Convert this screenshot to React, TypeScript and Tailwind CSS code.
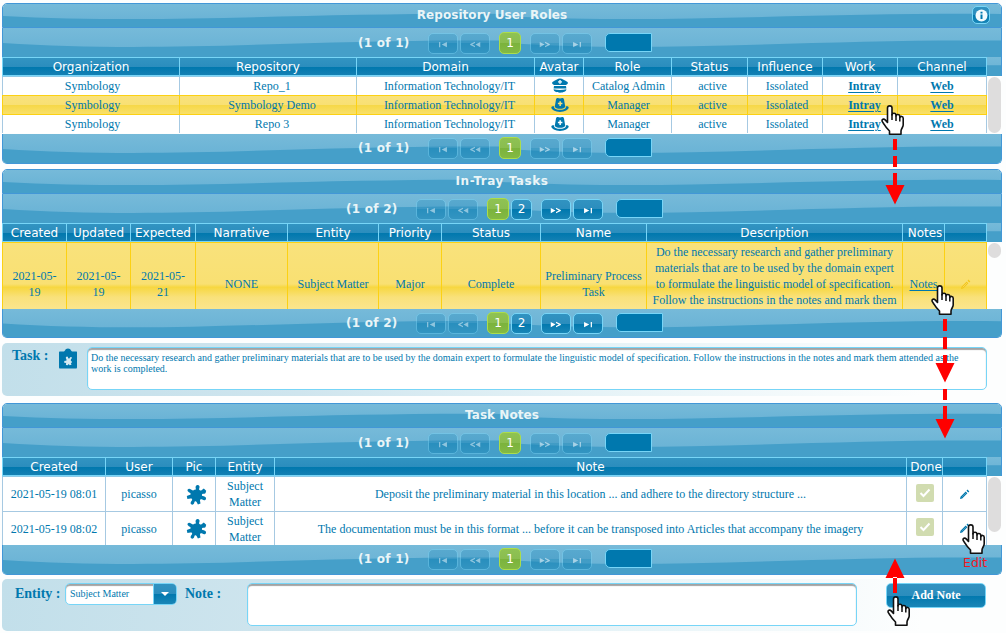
import React from "react";

const WAVE = "M0 15.5 C60 19.500 120 20.5 190 19 C290 16.5 390 12 500 13 L500 30 L0 30 Z";

function Wave() {
  return (
    <span className="absolute inset-0 flex bg-gradient-to-b from-[#76bad9] to-[#65b0d4]">
      {[0, 1].map((i) => (
        <svg key={i} className="h-full w-1/2" viewBox="0 0 500 30" preserveAspectRatio="none">
          <path d={WAVE} fill="#459fc9" />
        </svg>
      ))}
    </span>
  );
}

function NavGlyph({ kind }: { kind: number }) {
  return (
    <svg width="12" height="7" viewBox="0 0 13 8" className="mt-[2px]" fill="currentColor">
      {kind === 0 && <path d="M2 1h1.400v6H2zM11 1v6L5 4z" />}
      {kind === 1 && <path d="M12.500 1v6L7 4zM6.500 .8v1.600L3.200 4l3.300 1.600v1.600L1 4.700V3.300z" />}
      {kind === 2 && <path d="M.5 1v6L6 4zM6.500 .8v1.600L9.800 4 6.500 5.600v1.600L12 4.700V3.300z" />}
      {kind === 3 && <path d="M2 1v6l6-3zM9.600 1H11v6H9.600z" />}
    </svg>
  );
}

const glass = "bg-[linear-gradient(#3193c1_0%,#2b8dbd_50%,#0078ae_50%,#1a86b7_100%)]";

function NavButton({ kind, off }: { kind: number; off?: boolean }) {
  return (
    <span
      className={
        "flex h-[21px] w-[30px] items-center justify-center rounded-[5px] border border-[#77d5f7] text-white " +
        glass +
        (off ? " opacity-40" : "")
      }
    >
      <NavGlyph kind={kind} />
    </span>
  );
}

function Paginator({ pages, bottom }: { pages: number; bottom?: boolean }) {
  const two = pages === 2;
  return (
    <div
      className={
        "relative overflow-hidden border-x border-[#4297d7] " +
        (bottom ? "rounded-b-[5px] border-b " : "") +
        (bottom ? (two ? "h-[29px]" : "h-[30px]") : "h-[29px]")
      }
    >
      <Wave />
      <div
        className={
          "relative flex items-center " + (two ? "pl-[343px] " : "pl-[355px] ") + (bottom ? "pt-[3px]" : "pt-[4px]")
        }
      >
        <span className="w-[70px] pb-px font-['DejaVu_Sans'] text-[12px] leading-[20px] font-bold tracking-[0.25px] whitespace-pre text-[#eaf5f7]">
          (1 of {pages})
        </span>
        <NavButton kind={0} off />
        <span className="w-[2px]" />
        <NavButton kind={1} off />
        <span className="ml-[9px] flex h-[22px] w-[22px] items-center justify-center rounded-[5px] border border-[#acdd4a] bg-[linear-gradient(#8fc253_0%,#8abd50_50%,#7bb33c_50%,#83b944_100%)] font-['DejaVu_Sans'] text-[12px] text-white">
          1
        </span>
        {two && (
          <span
            className={
              "ml-[2px] flex h-[21px] w-[21px] items-center justify-center rounded-[5px] border border-[#77d5f7] font-['DejaVu_Sans'] text-[12px] text-white " +
              glass
            }
          >
            2
          </span>
        )}
        <span className="w-[9px]" />
        <NavButton kind={2} off={!two} />
        <span className="w-[2px]" />
        <NavButton kind={3} off={!two} />
        <span className="mb-px ml-[13px] h-[19px] w-[47px] rounded-l-[5px] border border-[#77d5f7] bg-[#0078ae]" />
      </div>
    </div>
  );
}

function Title({ text, info, wide }: { text: string; info?: boolean; wide?: boolean }) {
  return (
    <div className="relative h-[25px] overflow-hidden rounded-t-[5px] border border-[#4297d7]">
      <Wave />
      <div className="relative flex items-start pr-[11px]">
        <h2
          className={
            "flex-1 text-center font-['DejaVu_Sans'] text-[12px] leading-[23px] font-bold text-[#eaf5f7] " +
            (info ? "" : "pl-[11px] ") +
            (wide ? "tracking-[0.55px]" : "tracking-[0.05px]")
          }
        >
          {text}
        </h2>
        {info && (
          <span
            className={
              "-ml-[9px] mt-[2px] flex h-[18px] w-[18px] items-center justify-center rounded-[5px] border border-[#77d5f7] " + glass
            }
          >
            <svg width="13" height="13" viewBox="0 0 13 13">
              <circle cx="6.5" cy="6.5" r="6" fill="#f2fafd" />
              <path d="M5.500 2.700h2v1.800h-2zM5.500 5.400h2v4.700h-2z" fill="#0078ae" />
            </svg>
          </span>
        )}
      </div>
    </div>
  );
}

function Head({ cols, grid }: { cols: string[]; grid: string }) {
  return (
    <div className="relative h-[19px] overflow-hidden border-r border-[#4297d7]">
      <Wave />
      <div
        className={
          "relative grid h-full w-[985px] border-y border-l border-[#77d5f7] bg-[linear-gradient(#3294c2_0%,#2b8dbd_52%,#0078ae_54%,#1480b3_100%)] " +
          grid
        }
      >
        {cols.map((c, i) => (
          <span
            key={i}
            className={
              "border-r border-[#77d5f7] text-center font-['DejaVu_Sans'] text-[12px] leading-[18px] whitespace-nowrap text-white" +
              (c === "Notes" || c === "Done" ? " pl-[3px]" : "")
            }
          >
            {c}
          </span>
        ))}
      </div>
    </div>
  );
}

const CELL = "flex items-center justify-center border-r border-[#a6c9e2] text-center";
const YCELL = "flex items-center justify-center border-r border-[#fcd113] text-center";

const GRID_ROLES = "grid-cols-[177px_177px_178px_49px_88px_76px_75px_75px_89px]";
const GRID_TASKS = "grid-cols-[64px_64px_65px_92px_91px_63px_99px_106px_256px_42px_42px]";
const GRID_NOTES = "grid-cols-[103px_67px_43px_59px_632px_36px_44px]";

function CapIcon() {
  return (
    <svg width="18" height="16" viewBox="0 0 18 16" fill="#0078ae">
      <path d="M9 .5C11 .5 14 2.500 16.500 4c.9.8.4 2.300-1.500 3H3C1.100 6.300.6 4.800 1.500 4 4 2.500 7 .5 9 .5z" />
      <path d="M3 8h12l.4 2.500H2.600zM2.600 11.300c4 .8 8.800.8 12.800 0 0 2-2.900 3.400-6.400 3.400s-6.400-1.400-6.400-3.400z" />
      <path d="M8.200 2h1.600v1.100h1v1.600h-1v1H8.200v-1h-1V3.100h1z" fill="#dbeef7" />
    </svg>
  );
}

function HatIcon({ bg }: { bg: string }) {
  return (
    <svg width="18" height="16" viewBox="0 0 18 16" fill="#0078ae">
      <path d="M3.800 9.500 5 2.500C5.500.8 7 .6 9 1.600c2-1 3.500-.8 4 .9l1.200 7c0 1.500-2.700 2.300-5.200 2.300s-5.200-.8-5.200-2.300z" />
      <path d="M3.200 9.400C1.800 9.200.4 9.500.3 10.500c0 2.200 4 4.400 8.700 4.400s8.700-2.200 8.700-4.400c-.1-1-1.500-1.300-2.900-1.100l.1 1c-.4 1.600-3 2.400-5.900 2.400s-5.500-.8-5.900-2.400z" />
      <path d="M8.400 4.200h1.500v1.600h1.500v1.500H9.900V9H8.400V7.300H6.900V5.800h1.500z" fill={bg} />
    </svg>
  );
}

function PuzzleIcon() {
  return (
    <svg width="21" height="21" viewBox="0 0 21 21" fill="#0078ae">
      <circle cx="10.500" cy="10.500" r="5.200" />
      <path d="M5 5.500 7.800 7c1.600.6 2.700-.4 2.200-1.800C9 3 9.800.8 11.800 1c2 .2 2 2 1.400 3.600-.4 1.500.6 2.400 2 1.800l2.600-1.800 2.400 2.200-.6 2.200c-.6 1-1.800.7-2.800.8-1.400.3-1.300 1.900-.1 2.300 1.600.3 3.600.7 3.300 2.700-.4 2-2.600 1.700-3.700.7-1.100-.8-2.500-.1-2.300 1.300l.5 2.600-2.600 1-1.300-2.400c-.8-1.200-2.100-.7-2.300.5-.3 1.800-1.700 2.800-3.100 1.800-1.300-1-.2-2.800.7-3.900.7-1.200-.1-2.100-1.300-1.900L1.400 15 .8 12l2.600-.9c1.500-.4 1.700-1.600.4-2.300C2.100 8 1 6.800 1.700 5.600c.8-1.200 2.300-.8 3.300-.1z" />
    </svg>
  );
}

function Pencil({ color }: { color: string }) {
  return (
    <svg width="11" height="11" viewBox="0 0 11 11" fill={color}>
      <path d="M1 10l.5-2.300 5.200-5.200 1.700 1.700-5.200 5.200zM7.500 1.700 8.500.6l1.800 1.800-1 1.100z" />
      <path d="M2.700 8.300 7.200 3.800" stroke="#fff" strokeOpacity=".45" strokeWidth=".6" />
    </svg>
  );
}

function Check() {
  return (
    <span className="flex h-[18px] w-[18px] items-center justify-center rounded-[2px] bg-[#d1dcb0]">
      <svg width="12" height="10" viewBox="0 0 12 10">
        <path d="M1.500 5l3 3 6-6.500" fill="none" stroke="#fff" strokeWidth="2" />
      </svg>
    </span>
  );
}

function Hand({ pos }: { pos: string }) {
  return (
    <svg className={"absolute " + pos} width="24" height="31" viewBox="0 0 24 31">
      <path
        d="M6.500 17.500V3C6.500.2 11 .2 11 3v7c0-2.600 4-2.200 4 .2v.8c.3-2.200 3.800-1.800 3.800.5v1c.5-1.700 3.400-1.300 3.400.8V20c0 2-2.200 4-2.200 6v3.200H8.500V26c-2-2-4-4-5.500-6.800L1.200 16.400c-.7-2.200 1.600-3 3-1.500z"
        fill="#fff"
        stroke="#111"
        strokeWidth="1.600"
        strokeLinejoin="round"
      />
      <path d="M11 9v6M15 10.500V16M18.800 12v4.500" stroke="#111" strokeWidth="1.500" />
    </svg>
  );
}

function ScrollThumb({ h }: { h: string }) {
  return <span className={"mt-px ml-[1px] w-[13px] rounded-[7px] bg-[#dedddd] " + h} />;
}

const roles = [
  ["Repo_1", "Catalog Admin"],
  ["Symbology Demo", "Manager"],
  ["Repo 3", "Manager"],
];

const notes = [
  ["2021-05-19 08:01", "Deposit the preliminary material in this location ... and adhere to the directory structure ..."],
  [
    "2021-05-19 08:02",
    "The documentation must be in this format ... before it can be transposed into Articles that accompany the imagery",
  ],
];

const FIELD = "rounded-[5px] border border-[#77d5f7] bg-white shadow-[inset_0_2px_1px_#a3a3a3]";
const SOFT = "flex rounded-[5px] bg-[linear-gradient(95deg,#c2dfea_0%,#cfe5ee_30%,#e6f3f7_60%,#fdfefe_92%)]";

export default function App() {
  return (
    <div className="relative flex h-[633px] w-[1006px] flex-col overflow-hidden bg-[#fdfefe] pt-[3px] pr-[4px] pl-[2px] font-['Liberation_Serif',serif] text-[12px] leading-[16px] text-[#0078ae]">
      <section>
        <Title text="Repository User Roles" info />
        <Paginator pages={1} />
        <Head
          grid={GRID_ROLES}
          cols={["Organization", "Repository", "Domain", "Avatar", "Role", "Status", "Influence", "Work", "Channel"]}
        />
        <div className="flex h-[58px]">
          <div className="w-[985px] border-t border-[#8fcbe8]">
            {roles.map(([repo, role], i) => {
              const y = i === 1;
              const c = y ? YCELL : CELL;
              return (
                <div
                  key={i}
                  className={
                    "grid border-l " +
                    GRID_ROLES +
                    (y
                      ? " h-[20px] border-y border-[#fcd113] bg-[linear-gradient(#f9e27c_0%,#f8e074_48%,#f6d848_52%,#f9e06a_100%)]"
                      : " h-[18px] border-[#a6c9e2] bg-white")
                  }
                >
                  <span className={c + " pl-[3px]"}>Symbology</span>
                  <span className={c + " pl-[8px]"}>{repo}</span>
                  <span className={c + " pl-[8px]"}>Information Technology/IT</span>
                  <span className={c + " pl-[2px]"}>{i === 0 ? <CapIcon /> : <HatIcon bg={y ? "#f9e27c" : "#fff"} />}</span>
                  <span className={c + " pl-[2px] whitespace-nowrap"}>{role}</span>
                  <span className={c + " pl-[6px]"}>active</span>
                  <span className={c + " pl-[4px]"}>Issolated</span>
                  <a className={c + " pl-[9px] font-bold underline underline-offset-[2px]"}>Intray</a>
                  <a className={c + " font-bold underline underline-offset-[2px]"}>Web</a>
                </div>
              );
            })}
          </div>
          <ScrollThumb h="h-[56px]" />
        </div>
        <Paginator pages={1} bottom />
      </section>

      <section className="mt-[5px]">
        <Title text="In-Tray Tasks" wide />
        <Paginator pages={2} />
        <Head
          grid={GRID_TASKS}
          cols={["Created", "Updated", "Expected", "Narrative", "Entity", "Priority", "Status", "Name", "Description", "Notes", ""]}
        />
        <div className="flex h-[67px] overflow-hidden">
          <div
            className={
              "grid h-[83px] w-[985px] shrink-0 border-t border-l border-[#fcd113] bg-[linear-gradient(#f9e27c_0%,#f9e072_50%,#f7d740_54%,#f9e17a_66%,#fae58c_80%)] " +
              GRID_TASKS
            }
          >
            <span className={YCELL}>2021-05-<br />19</span>
            <span className={YCELL}>2021-05-<br />19</span>
            <span className={YCELL}>2021-05-<br />21</span>
            <span className={YCELL}>NONE</span>
            <span className={YCELL}>Subject Matter</span>
            <span className={YCELL}>Major</span>
            <span className={YCELL}>Complete</span>
            <span className={YCELL + " whitespace-nowrap"}>Preliminary Process<br />Task</span>
            <span className="border-r border-[#fcd113] pt-px text-center whitespace-nowrap">
              Do the necessary research and gather preliminary<br />
              materials that are to be used by the domain expert<br />
              to formulate the linguistic model of specification.<br />
              Follow the instructions in the notes and mark them
            </span>
            <a className={YCELL + " underline underline-offset-[2px]"}>Notes</a>
            <span className={YCELL}>
              <Pencil color="#f3c61c" />
            </span>
          </div>
          <ScrollThumb h="h-[15px]" />
        </div>
        <Paginator pages={2} bottom />
      </section>

      <section className={"mt-[5px] h-[53px] " + SOFT}>
        <span className="mt-[5px] ml-[10px] w-[46px] text-[14px] font-bold whitespace-nowrap">Task :</span>
        <svg className="mt-[5px] w-[20px]" height="22" viewBox="0 0 20 22">
          <path d="M2 3.500h4l1-1c.5-2.800 5.500-2.800 6 0l1 1h4c1 0 1 .3 1 1V19c0 1-.3 1.500-1.200 1.500H2.200C1.300 20.500 1 20 1 19V4.500c0-.7.300-1 1-1z" fill="#0078ae" />
          <path d="M9 8.500c1 0 1.300.8 1 1.700l1.500.3c.2-1 .8-1.900 1.800-1.500 1 .5.500 1.700-.3 2.100l-.2 1.700c1.500.2 1.400 2.300.1 2.500l.6 1.500-2 .4c-.2-1.500-1.700-1.200-1.600.1l-2-.2.3-2.300c-.9.3-2 .2-2-.9 0-1.200 1.200-1.300 2-.8l.3-1.700c-.8-.8-1.200-2.800.5-2.900z" fill="#d5eaf2" />
        </svg>
        <div className={"mt-[4px] ml-[9px] h-[43px] w-[900px] px-[3px] pt-[4px] text-[10px] leading-[11px] " + FIELD}>
          Do the necessary research and gather preliminary materials that are to be used by the domain expert to formulate the
          linguistic model of specification. Follow the instructions in the notes and mark them attended as the
          <br />
          work is completed.
        </div>
      </section>

      <section className="mt-[7px]">
        <Title text="Task Notes" />
        <Paginator pages={1} />
        <Head grid={GRID_NOTES} cols={["Created", "User", "Pic", "Entity", "Note", "Done", ""]} />
        <div className="flex h-[69px]">
          <div className="w-[985px] border-t border-[#8fcbe8]">
            {notes.map(([date, text], i) => (
              <div
                key={i}
                className={
                  "grid border-l border-[#a6c9e2] bg-white " + GRID_NOTES + (i === 0 ? " h-[35px] border-b" : " h-[33px]")
                }
              >
                <span className={CELL}>{date}</span>
                <span className={CELL}>picasso</span>
                <span className={CELL + " pl-[4px]"}>
                  <PuzzleIcon />
                </span>
                <span className={CELL}>Subject<br />Matter</span>
                <span className={CELL}>{text}</span>
                <span className={CELL + " pb-[3px]"}>
                  <Check />
                </span>
                <span className={CELL}>
                  <Pencil color="#0078ae" />
                </span>
              </div>
            ))}
          </div>
          <ScrollThumb h="h-[55px]" />
        </div>
        <Paginator pages={1} bottom />
      </section>

      <section className={"mt-[4px] h-[52px] pt-[4px] " + SOFT}>
        <span className="mt-[3px] ml-[13px] w-[50px] text-[14px] font-bold whitespace-nowrap">Entity :</span>
        <div className={"flex h-[22px] w-[112px] overflow-hidden text-[10px] leading-[20px] " + FIELD}>
          <span className="flex-1 pl-[4px]">Subject Matter</span>
          <span className={"flex w-[23px] items-center justify-center border-l border-[#77d5f7] " + glass}>
            <svg width="8" height="4" viewBox="0 0 8 4">
              <path d="M0 0h8L4 4z" fill="#fff" />
            </svg>
          </span>
        </div>
        <span className="mt-[3px] ml-[8px] w-[62px] text-[14px] font-bold whitespace-nowrap">Note :</span>
        <div className={"h-[43px] w-[610px] " + FIELD} />
        <button
          className={
            "ml-[29px] h-[25px] w-[100px] rounded-[5px] border border-[#77d5f7] pb-[2px] font-['Liberation_Serif'] text-[12px] font-bold text-white " +
            glass
          }
        >
          Add Note
        </button>
      </section>

      <svg className="pointer-events-none absolute inset-0" width="1006" height="633" viewBox="0 0 1006 633" fill="#f00">
        <path d="M893 139h4v11h-4zM893 156h4v11h-4zM893 173h4v12h-4zM885.500 185h19L895 204.500z" />
        <path d="M943 319h4v12h-4zM943 337h4v12h-4zM943 355h4v8h-4zM935.500 363h19L945 382.500z" />
        <path d="M943 389h4v11h-4zM943 406h4v13h-4zM935.500 419h19L945 438.500z" />
        <path d="M893 577h4v16h-4zM885.500 578h19L895 558.500z" />
      </svg>
      <Hand pos="top-[105px] left-[881px]" />
      <Hand pos="top-[285px] left-[931px]" />
      <Hand pos="top-[524px] left-[962px]" />
      <Hand pos="top-[596px] left-[887px]" />
      <span className="absolute top-[555px] left-[963px] font-['DejaVu_Sans'] text-[12.500px] text-[#f01822]">Edit</span>
    </div>
  );
}
